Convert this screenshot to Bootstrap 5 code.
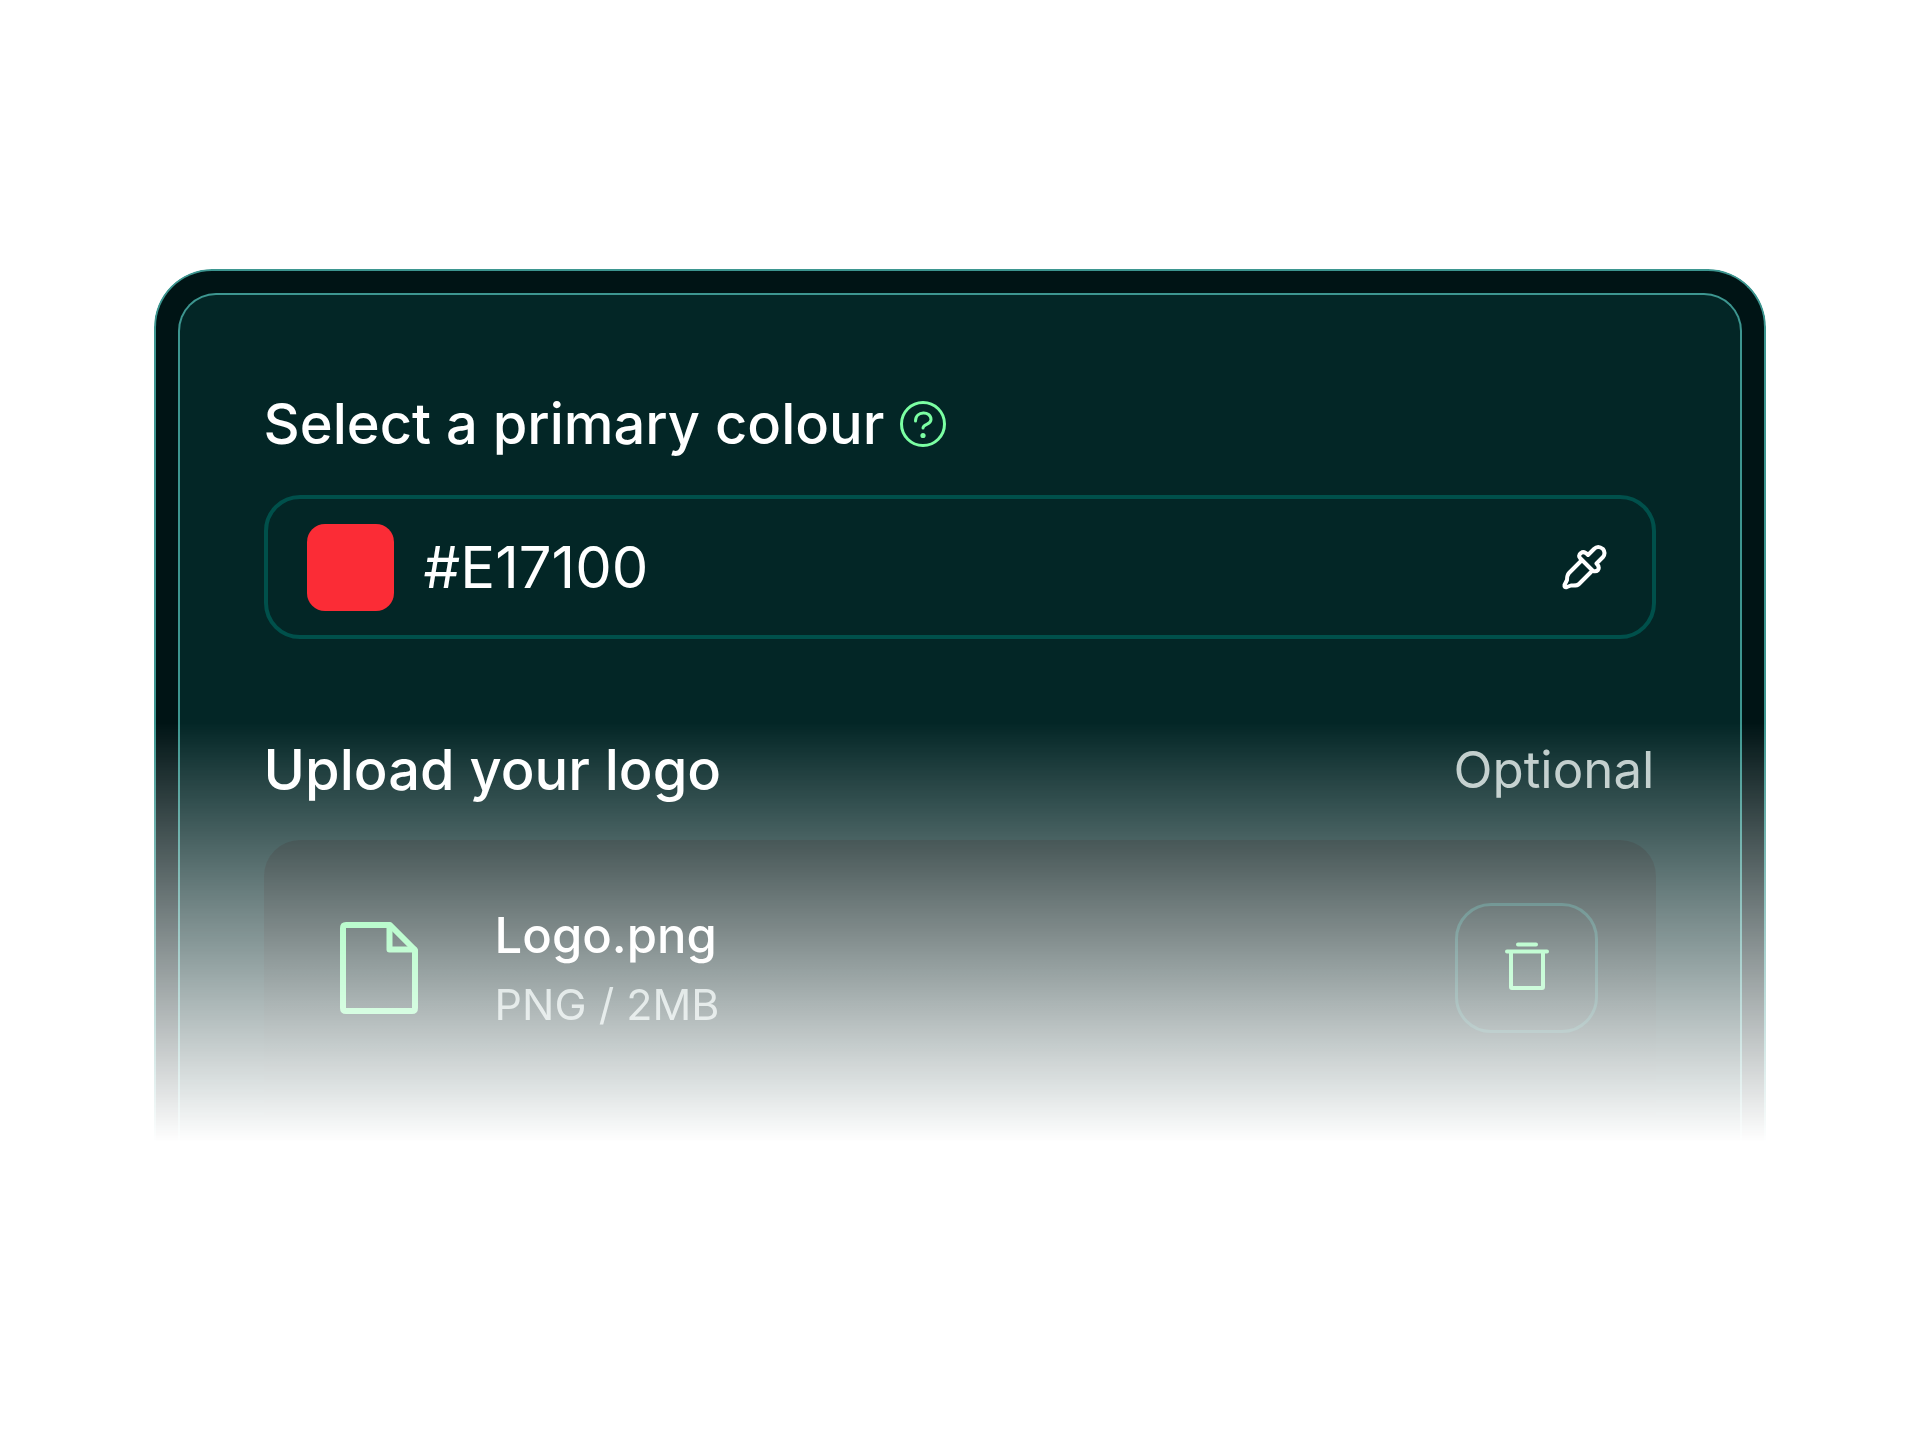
<!DOCTYPE html>
<html lang="en">
<head>
<meta charset="utf-8">
<meta name="viewport" content="width=device-width, initial-scale=1">
<title>Branding</title>
<link rel="stylesheet" href="https://cdn.jsdelivr.net/npm/bootstrap@5.3.0/dist/css/bootstrap.min.css">
<style>
body { background: #fff; color: #fff; font-family: Inter, "Liberation Sans", sans-serif; }
.stage { padding: 269px 8% 0; }
.frame-outer {
  padding: 22px 22px 0; border: 2px solid #3d9690; border-bottom: 0;
  border-radius: 58px 58px 0 0; background: #001415;
  -webkit-mask-image: linear-gradient(#000 52%, transparent);
  mask-image: linear-gradient(#000 52%, transparent);
}
.frame-inner {
  padding: 93px 84px 0; border: 2px solid #3d9690; border-bottom: 0;
  border-radius: 38px 38px 0 0; background: #032626;
}
.title { font-size: 56px; line-height: 72px; font-weight: 500; }
.title, .file-title { font-kerning: normal; }
.help-btn { line-height: 0; }
.color-field {
  height: 144px; padding: 0 44px 0 39px; margin-top: 35px;
  border: 4px solid #00504b; border-radius: 36px;
}
.swatch { width: 87px; height: 87px; padding: 0; border: 0; background: none; flex: none; cursor: pointer; }
.swatch::-webkit-color-swatch-wrapper { padding: 0; }
.swatch::-webkit-color-swatch { border: 0; border-radius: 18px; }
.hex { min-width: 0; margin-left: 30px; padding: 0; border: 0; outline: 0; background: none; color: #fff; font-size: 58px; line-height: 72px; }
.upload-head { margin-top: 95px; }
.muted-lg { margin-right: 2px; color: #bccac8; font-size: 51px; line-height: 72px; }
.file-box { margin-top: 34px; padding: 58px 58px 104px 76px; border-radius: 36px 36px 0 0; background: linear-gradient(#001616 30%, #032323 75%); }
.file-meta { margin-left: 77px; padding-top: 4px; }
.file-title { font-size: 49px; line-height: 68px; font-weight: 500; }
.file-size { color: #b2c4c2; font-size: 43px; line-height: 68px; }
.trash-btn { width: 143px; height: 130px; border: 3px solid #0a4a46; border-radius: 36px; }
svg { display: block; fill: none; stroke-linecap: round; stroke-linejoin: round; }
</style>
</head>
<body>
<main class="stage">
  <div class="frame-outer">
    <form class="frame-inner">
      <div class="d-flex align-items-center gap-3">
        <label class="title" for="hex">Select a primary colour</label>
        <button type="button" class="help-btn btn p-0 border-0" aria-label="Help">
          <svg width="46" height="46" viewBox="0 0 46 46" stroke="#7bffa3" stroke-width="3">
            <circle cx="23" cy="23" r="21.500"/>
            <path d="M15.500 20C15.500 9.500 31 9.500 31 18.500C31 24 23 22.500 23 27"/>
            <circle cx="23" cy="34.500" r="2.600" fill="#7bffa3" stroke="none"/>
          </svg>
        </button>
      </div>
      <div class="color-field d-flex align-items-center">
        <input class="swatch" type="color" value="#fb2c36" aria-label="Colour swatch">
        <input class="hex flex-grow-1" id="hex" type="text" value="#E17100">
        <button type="button" class="btn p-0 border-0" aria-label="Pick a colour">
          <svg width="46" height="46" viewBox="0 0 46 46" stroke="#fff" stroke-width="4">
            <path d="M19 17L7 29Q5 31 5 36L2.500 41Q2 44 5 43L9 41.500Q15 42 17 40L29 28"/>
            <path d="M18 14L31 27Q34 28 36 26Q38 23 34.500 19.500L41 13Q44 9 41 5Q36 1 32 5L26 11Q22 6.500 19 9Q16 11 18 14Z"/>
          </svg>
        </button>
      </div>
      <div class="upload-head d-flex align-items-center justify-content-between">
        <div class="title">Upload your logo</div>
        <div class="muted-lg">Optional</div>
      </div>
      <div class="file-box d-flex align-items-center">
        <svg width="78" height="92" viewBox="0 0 78 92" stroke="#7bf8a0" stroke-width="6">
          <path d="M6 3H50L75 28V86Q75 89 72 89H6Q3 89 3 86V6Q3 3 6 3Z"/>
          <path d="M49.500 4V27.500H74"/>
        </svg>
        <div class="file-meta">
          <div class="file-title">Logo.png</div>
          <div class="file-size">PNG / 2MB</div>
        </div>
        <button type="button" class="trash-btn btn p-0 ms-auto d-flex align-items-center justify-content-center" aria-label="Delete file">
          <svg class="mb-1" width="44" height="48" viewBox="0 0 44 48" stroke="#7bf8a0" stroke-width="4">
            <path d="M13 2.500H31M2 9.500H42M6 10V45Q6 46 7 46H37Q38 46 38 45V10"/>
          </svg>
        </button>
      </div>
    </form>
  </div>
</main>
<script src="https://cdn.jsdelivr.net/npm/bootstrap@5.3.0/dist/js/bootstrap.bundle.min.js"></script>
</body>
</html>
